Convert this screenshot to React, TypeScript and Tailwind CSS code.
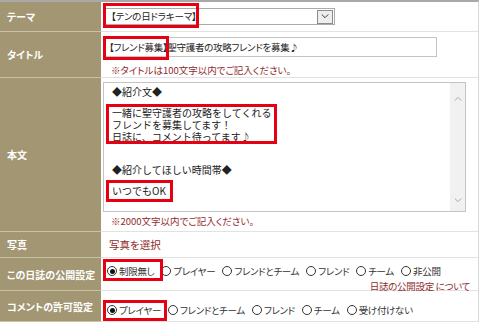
import React from 'react';

const palt = "[font-feature-settings:'palt']";

function Label({ children }: { children: React.ReactNode }) {
  return (
    <div className={`flex w-[101px] shrink-0 items-center border-b border-[#c9c0a6] bg-[#a39673] pl-[7px] text-[10px] font-bold text-white ${palt}`}>
      {children}
    </div>
  );
}

function RedBox({ className }: { className: string }) {
  return <div className={`pointer-events-none absolute border-[3px] border-[#e60012] ${className}`} />;
}

function Radio({ label, checked }: { label: string; checked?: boolean }) {
  return (
    <span className="flex items-center gap-[2px]">
      <span className="flex h-[10px] w-[10px] items-center justify-center rounded-full border border-[#333]">
        {checked && <span className="h-[5px] w-[5px] rounded-full bg-[#111]" />}
      </span>
      <span>{label}</span>
    </span>
  );
}

function Chevron({ up, className }: { up?: boolean; className?: string }) {
  return (
    <svg viewBox="0 0 10 6" className={className} fill="none" stroke="currentColor" strokeWidth="1.2">
      {up ? <path d="M1 5.5 L5 1.5 L9 5.5" /> : <path d="M1 0.5 L5 4.5 L9 0.5" />}
    </svg>
  );
}

export default function App() {
  return (
    <div className="h-[323px] w-[480px] overflow-hidden bg-white font-['Noto_Sans_CJK_JP',sans-serif] text-[#222]">
      <div className="mr-[1px] border-t-2 border-r border-[#a8a8a8] border-r-[#d8d8d8]">
        {/* テーマ */}
        <div className="flex h-[30px]">
          <Label>テーマ</Label>
          <div className="relative flex flex-1 items-center border-b border-[#e2e2e2] pl-[2px]">
            <div className={`flex h-[17px] w-[232px] items-center justify-between border border-[#aaa] bg-white pl-[7px] pr-px text-[9.5px] tracking-[-0.2px] ${palt}`}>
              <span>【テンの日ドラキーマ】</span>
              <span className="flex h-[14px] w-[16px] items-center justify-center border border-[#8c8c8c] bg-[#eee]">
                <Chevron className="h-[5px] w-[8px] text-[#333]" />
              </span>
            </div>
            <RedBox className="left-[2px] top-[1px] h-[25px] w-[96px]" />
          </div>
        </div>

        {/* タイトル */}
        <div className="flex h-[46px]">
          <Label>タイトル</Label>
          <div className="relative flex-1 border-b border-[#e2e2e2] pl-[2px] pt-[5px]">
            <div className={`flex h-[20px] w-[334px] items-center border border-[#c4c4c4] pl-[5px] text-[9.5px] tracking-[-0.3px] ${palt}`}>
              【フレンド募集】聖守護者の攻略フレンドを募集♪
            </div>
            <div className={`mt-[7px] pl-[8px] text-[9.5px] leading-[12px] text-[#8e2b2b] ${palt}`}>
              ※タイトルは100文字以内でご記入ください。
            </div>
            <RedBox className="left-[2px] top-[4px] h-[24px] w-[66px]" />
          </div>
        </div>

        {/* 本文 */}
        <div className="flex h-[154px]">
          <Label>本文</Label>
          <div className="relative flex-1 border-b border-[#e2e2e2] pl-[2px] pt-[4px]">
            <div className="flex h-[130px] w-[363px] border border-[#c4c4c4]">
              <div className="flex-1 pl-[8px] pt-[3px] text-[10px] leading-[12px]">
                <div>◆紹介文◆</div>
                <div className="mt-[9px]">
                  <div>一緒に聖守護者の攻略をしてくれる</div>
                  <div>フレンドを募集してます！</div>
                  <div>日誌に、コメント待ってます♪</div>
                </div>
                <div className="mt-[21px]">◆紹介してほしい時間帯◆</div>
                <div className="mt-[9px]">いつでもOK</div>
              </div>
              <div className="flex w-[15px] flex-col items-center justify-between bg-[#f1f1f1] pb-[8px] pt-[13px] text-[#a6a6a6]">
                <Chevron up className="h-[5px] w-[8px]" />
                <Chevron className="h-[5px] w-[8px]" />
              </div>
            </div>
            <div className={`mt-[3px] pl-[8px] text-[9.5px] leading-[12px] text-[#8e2b2b] ${palt}`}>
              ※2000文字以内でご記入ください。
            </div>
            <RedBox className="left-[5px] top-[26px] h-[40px] w-[171px]" />
            <RedBox className="left-[5px] top-[102px] h-[22px] w-[67px]" />
          </div>
        </div>

        {/* 写真 */}
        <div className="flex h-[26px]">
          <Label>写真</Label>
          <div className={`flex flex-1 items-center border-b border-[#e2e2e2] pl-[8px] text-[10.5px] text-[#8e2b2b] ${palt}`}>
            写真を選択
          </div>
        </div>

        {/* 公開設定 */}
        <div className="flex h-[33px]">
          <Label>この日誌の公開設定</Label>
          <div className={`relative flex-1 border-b border-[#e2e2e2] pl-[6px] pt-[7px] text-[9.5px] leading-[12px] tracking-[-0.3px] text-[#333] ${palt}`}>
            <div className="flex gap-[7px]">
              <Radio label="制限無し" checked />
              <Radio label="プレイヤー" />
              <Radio label="フレンドとチーム" />
              <Radio label="フレンド" />
              <Radio label="チーム" />
              <Radio label="非公開" />
            </div>
            <div className="mt-[3px] pr-[8px] text-right text-[#8e2b2b]">日誌の公開設定 について</div>
            <RedBox className="left-[2px] top-[1px] h-[22px] w-[60px]" />
          </div>
        </div>

        {/* コメント */}
        <div className="flex h-[31px]">
          <Label>コメントの許可設定</Label>
          <div className={`relative flex-1 border-b border-[#e2e2e2] pl-[6px] pt-[13px] text-[9.5px] leading-[12px] tracking-[-0.3px] text-[#333] ${palt}`}>
            <div className="flex gap-[7px]">
              <Radio label="プレイヤー" checked />
              <Radio label="フレンドとチーム" />
              <Radio label="フレンド" />
              <Radio label="チーム" />
              <Radio label="受け付けない" />
            </div>
            <RedBox className="left-[2px] top-[9px] h-[21px] w-[64px]" />
          </div>
        </div>
      </div>
    </div>
  );
}
